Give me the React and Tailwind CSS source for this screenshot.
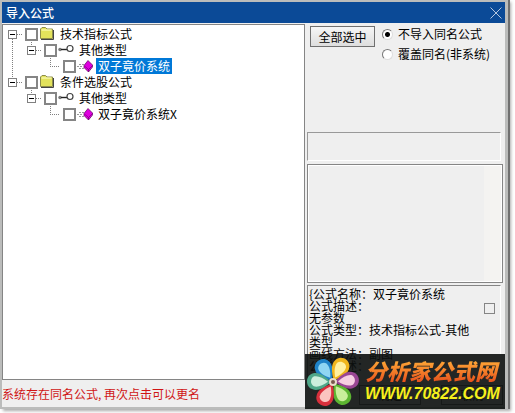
import React, { useState } from 'react'

const rows = [
  { cells: ['boxTop'], icon: 'folder', label: '技术指标公式' },
  { cells: ['line', 'box'], icon: 'key', label: '其他类型' },
  { cells: ['line', 'blank', 'leaf'], icon: 'gem', label: '双子竟价系统', selected: true },
  { cells: ['boxEnd'], icon: 'folder', label: '条件选股公式' },
  { cells: ['blank', 'box'], icon: 'key', label: '其他类型' },
  { cells: ['blank', 'blank', 'leaf'], icon: 'gem', label: '双子竟价系统X' },
];

const description = [
  '{公式名称：双子竟价系统',
  '公式描述：',
  '无参数',
  '公式类型：技术指标公式-其他类型',
  '画线方法：副图',
  '公式描述：',
];

const petals = [
  { angle: -34, color: '#1f83c8', inner: '#8fd6f3' },
  { angle: 27, color: '#f0b51c', inner: '#fff0a0' },
  { angle: 84, color: '#9a4694', inner: '#f6cfe2' },
  { angle: 146, color: '#5cb531', inner: '#c9ef9a' },
  { angle: 208, color: '#d8303c', inner: '#fbc4c0' },
  { angle: 272, color: '#4fa789', inner: '#cdeedd' },
];

const TreeCell = ({ type }) => {
  const dots = { stroke: '#808080', strokeDasharray: '1 1', fill: 'none' };
  const isBox = type.startsWith('box');
  return (
    <svg className="h-4 w-[19px] shrink-0" viewBox="0 0 19 16" shapeRendering="crispEdges" aria-hidden="true">
      {type === 'line' && <path d="M9.5 0V16" {...dots} />}
      {type === 'leaf' && <path d="M9.5 0V8.5H21" {...dots} />}
      {type === 'boxTop' && <path d="M9.5 13V16" {...dots} />}
      {(type === 'box' || type === 'boxEnd') && <path d="M9.5 0V4" {...dots} />}
      {isBox && (
        <>
          <path d="M14 8.5H19" {...dots} />
          <rect x="5.5" y="4.5" width="8" height="8" fill="#fff" stroke="#808080" />
          <path d="M7 8.5H12" stroke="#000" />
        </>
      )}
    </svg>
  );
};

const FolderIcon = () => (
  <svg className="h-4 w-4" viewBox="0 0 16 16" aria-hidden="true">
    <path d="M1.5 12.5V3L3 1.5H6.5L8 3H13.5V12.5Z" fill="#e2e25c" stroke="#8d8d4a" />
    <path d="M2.5 4H12.5" stroke="#ffffc8" />
    <path d="M14.500 4V13.500H2" fill="none" stroke="#444" />
  </svg>
);

const KeyIcon = () => (
  <svg className="h-4 w-4" viewBox="0 0 16 16" aria-hidden="true">
    <circle cx="2" cy="7.5" r="1.700" fill="#777" />
    <path d="M3 7.5H9" stroke="#222" strokeWidth="1.400" />
    <circle cx="12" cy="6.500" r="3" fill="#fff" stroke="#444" strokeWidth="1.200" />
  </svg>
);

const GemIcon = () => (
  <svg className="h-4 w-4" viewBox="0 0 16 16" aria-hidden="true">
    <path d="M2 6.5H7M0 8.5H6M2 10.5H7" stroke="#999" strokeDasharray="2 1" />
    <path d="M11 2.500L15.500 7V9L11.500 14L7 9.500V7.500Z" fill="#e000e0" stroke="#5a005a" strokeWidth="0.700" />
    <path d="M7.500 8L11.500 11.500L15.500 7.500M11.500 11.500V14" fill="none" stroke="#6a006a" strokeWidth="0.600" />
  </svg>
);

const icons = { folder: FolderIcon, key: KeyIcon, gem: GemIcon };

const TreeRow = ({ row }) => {
  const Icon = icons[row.icon];
  return (
    <li>
      <label className="flex h-4 items-center">
        {row.cells.map((type, i) => <TreeCell key={i} type={type} />)}
        <input type="checkbox" className="ml-[3px] h-[13px] w-[13px] shrink-0 appearance-none border-2 border-[#858585] bg-white checked:bg-[#858585]" />
        <span className="ml-px w-[19px]"><Icon /></span>
        <span className={row.selected ? 'h-4 bg-[#0078d7] px-[2px] leading-4 text-white' : 'h-4 px-[2px] leading-4'}>{row.label}</span>
      </label>
    </li>
  );
};

const Radio = ({ label, ...props }) => (
  <label className="flex h-5 items-center gap-[5px] whitespace-nowrap">
    <input
      type="radio"
      name="mode"
      className="h-[11px] w-[11px] appearance-none rounded-full border border-t-[#777] border-r-[#ddd] border-b-[#ddd] border-l-[#777] bg-white checked:bg-[radial-gradient(circle,#000_2px,#fff_3px)]"
      {...props}
    />
    {label}
  </label>
);

const Watermark = () => (
  <div className="pointer-events-none absolute inset-x-0 top-[25px] bottom-0 overflow-hidden pl-[2px] font-['DejaVu_Sans','Noto_Sans_CJK_SC',sans-serif] text-2xl leading-[82px] whitespace-nowrap text-black/[0.018]" aria-hidden="true">
    {[0, 1, 2, 3, 4].map((i) => (
      <div key={i} className="flex h-[82px] gap-4">
        <span>分析家公式网www.70822.com</span>
        <span>分析家公式网</span>
      </div>
    ))}
  </div>
);

const Banner = () => (
  <div className="absolute right-0 -bottom-[2px] flex h-[55px] w-[200px] items-center bg-[#0c100e]/90 pl-px">
    <svg className="h-[54px] w-[54px] shrink-0" viewBox="-27 -27 54 54" aria-hidden="true">
      {petals.map((p) => (
        <g key={p.angle} transform={`rotate(${p.angle})`}>
          <path d="M0 -2C-6 -8 -10 -15 -8 -20C-6 -28 6 -28 8 -20C10 -15 6 -8 0 -2Z" fill={p.color} />
          <path d="M0 -5C-4 -10 -6 -15 -5 -19C-3 -23 3 -23 5 -19C6 -15 4 -10 0 -5Z" fill={p.inner} />
        </g>
      ))}
      <circle r="4" fill="#e9dcc9" />
      <circle r="2" fill="#78584c" />
    </svg>
    <div className="flex flex-col pt-px pl-[5px] whitespace-nowrap">
      <span className="bg-linear-to-b from-[#ffb13a] to-[#e8501c] bg-clip-text text-[22px] leading-6 font-black text-transparent italic">分析家公式网</span>
      <a href="#" className="font-['Liberation_Sans',sans-serif] text-base leading-6 font-bold text-[#f6f01c] italic">WWW.70822.COM</a>
    </div>
  </div>
);

const App = () => {
  const [mode, setMode] = useState('skip');

  return (
    <div className="flex min-h-screen flex-col bg-white pr-[7px] pb-1 font-['Noto_Sans_CJK_SC',sans-serif] text-xs text-black">
      <div className="relative flex flex-1 flex-col border-2 border-r-[3px] border-[#bbbcbb] bg-[#efefef] shadow-[2px_0_0_#707070,3px_2px_3px_#aaa]">

        {/* Title bar */}
        <header className="flex h-[21px] items-center justify-between bg-[#0b4a97] pr-[3px] pl-1 text-white">
          <h1 className="font-medium">导入公式</h1>
          <button aria-label="关闭">
            <svg className="h-3 w-3" viewBox="0 0 12 12" aria-hidden="true">
              <path d="M0.5 0.5L11.5 11.5M11.5 0.5L0.5 11.5" stroke="#b4c6de" />
            </svg>
          </button>
        </header>

        <main className="flex flex-1 pt-px">
          {/* Formula tree */}
          <section className="flex flex-1 flex-col">
            <ul className="flex-1 border border-[#858585] bg-white pt-px">
              {rows.map((row, i) => <TreeRow key={i} row={row} />)}
            </ul>
            <p className="h-[27px] leading-[27px] text-[#d01515]">系统存在同名公式, 再次点击可以更名</p>
          </section>

          {/* Options */}
          <section className="flex w-[200px] flex-col px-[2px] pb-[2px]">
            <div className="flex h-[108px] items-start gap-[7px] pl-[3px]">
              <button className="mt-[2px] h-[21px] w-[65px] border border-[#707070] bg-linear-to-b from-[#f6f6f6] to-[#dedede] leading-[18px]">全部选中</button>
              <div>
                <Radio label="不导入同名公式" checked={mode === 'skip'} onChange={() => setMode('skip')} />
                <Radio label="覆盖同名(非系统)" checked={mode === 'cover'} onChange={() => setMode('cover')} />
              </div>
            </div>
            <div className="mr-[2px] h-[29px] border border-t-[#999] border-r-white border-b-white border-l-[#999]" />
            <div className="mt-[3px] flex flex-1 justify-end border border-[#858585] outline-1 -outline-offset-2 outline-white">
              <div className="w-[18px] bg-[#f4f3f1]" />
            </div>
            <div className="mt-[2px] mr-[2px] flex h-[97px] justify-between border border-t-[#858585] border-r-white border-b-white border-l-[#858585] pt-[2px] pl-px">
              <div className="w-[168px] leading-3">
                {description.map((line, i) => <p key={i}>{line}</p>)}
              </div>
              <input type="checkbox" aria-label="公式描述" className="mt-[15px] mr-[5px] h-[11px] w-[11px] appearance-none border border-[#858585]" />
            </div>
            <div className="mt-[3px] flex justify-end gap-5">
              <button className="h-5 w-[62px] border border-[#707070] leading-4">确定</button>
              <button className="h-5 w-[62px] border border-[#707070] leading-4">取消</button>
            </div>
          </section>
        </main>

        <Watermark />
        <Banner />
      </div>
    </div>
  );
}

export default App;
